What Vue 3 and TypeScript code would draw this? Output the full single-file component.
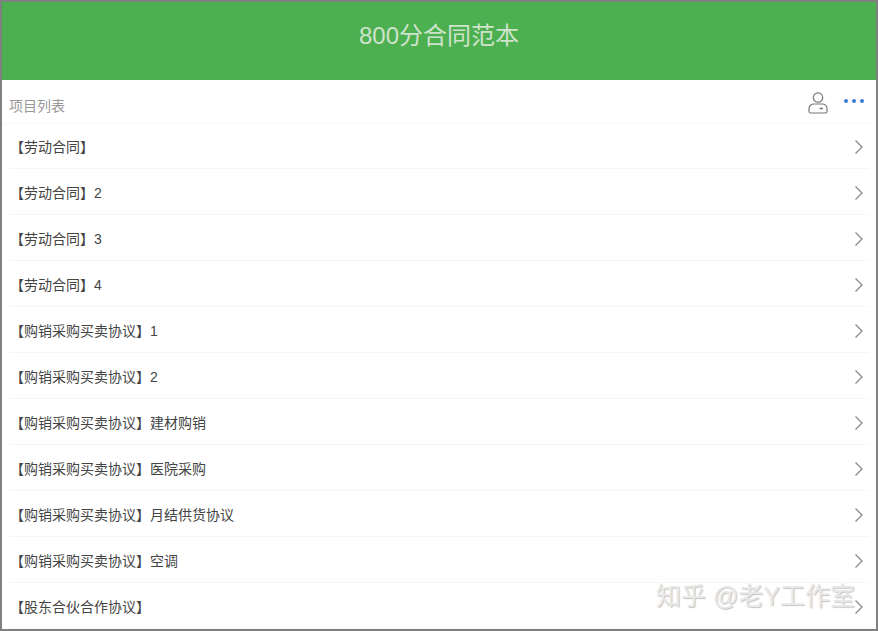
<script setup lang="ts">
const items: string[] = [
  '【劳动合同】',
  '【劳动合同】2',
  '【劳动合同】3',
  '【劳动合同】4',
  '【购销采购买卖协议】1',
  '【购销采购买卖协议】2',
  '【购销采购买卖协议】建材购销',
  '【购销采购买卖协议】医院采购',
  '【购销采购买卖协议】月结供货协议',
  '【购销采购买卖协议】空调',
  '【股东合伙合作协议】'
]
</script>

<template>
  <div class="page">
    <header class="top-bar">800分合同范本</header>
    <div class="list-head">
      <span class="list-title">项目列表</span>
      <div class="head-icons">
        <svg class="user-icon" width="20" height="22" viewBox="0 0 20 22" fill="none" stroke="#777" stroke-width="1.2">
          <circle cx="10" cy="5.500" r="4.700" />
          <path d="M2.500 21h15c1 0 1.500-.5 1.500-1.500v-2.500c0-3-2-5-5-5h-8c-3 0-5 2-5 5v2.500c0 1 .5 1.500 1.500 1.500z" />
          <path d="M11.500 16.500h3.500" stroke-width="1.500" />
        </svg>
        <div class="dots">
          <i></i><i></i><i></i>
        </div>
      </div>
    </div>
    <ul class="list">
      <li v-for="item in items" :key="item" class="row">
        <span class="row-text">{{ item }}</span>
        <svg class="chevron" width="10" height="16" viewBox="0 0 10 16" fill="none" stroke="#8a8a8a" stroke-width="1.300">
          <path d="M1.500 1.500 8 8l-6.500 6.500" />
        </svg>
      </li>
    </ul>
    <div class="watermark">知乎 @老Y工作室</div>
  </div>
</template>

<style scoped>
.page {
  position: relative;
  box-sizing: border-box;
  width: 878px;
  height: 631px;
  border: 2px solid #808080;
  background: #fff;
  overflow: hidden;
  font-family: "Liberation Sans", "Noto Sans CJK SC", sans-serif;
}
.top-bar {
  height: 78px;
  background: #4caf50;
  color: #cfe3cc;
  font-size: 24px;
  line-height: 68px;
  text-align: center;
}
.list-head {
  height: 44px;
  box-sizing: border-box;
  display: flex;
  justify-content: space-between;
  padding: 0 12px 0 7px;
  border-bottom: 1px solid #f8f8f8;
}
.list-title {
  font-size: 14px;
  line-height: 52px;
  color: #999;
}
.head-icons {
  display: flex;
  align-items: flex-start;
  gap: 16px;
}
.user-icon {
  margin-top: 12px;
}
.dots {
  display: flex;
  gap: 4px;
  margin-top: 19px;
}
.dots i {
  width: 4px;
  height: 4px;
  border-radius: 50%;
  background: #3b7dd8;
}
.list {
  margin: 0;
  padding: 0;
  list-style: none;
}
.row {
  height: 46px;
  box-sizing: border-box;
  margin-left: 7px;
  margin-right: 7px;
  padding: 0 5px 0 1px;
  display: flex;
  justify-content: space-between;
  align-items: center;
  border-bottom: 1px solid #f6f6f6;
  color: #444;
  font-size: 14px;
}
.row:first-child {
  height: 45px;
}
.chevron {
  margin-top: 2px;
}
.watermark {
  position: absolute;
  left: 654px;
  top: 578px;
  font-size: 25px;
  line-height: 32px;
  white-space: nowrap;
  color: #e9e9e9;
  text-shadow: 1px 1px 1px #c4c4c4;
}
</style>
